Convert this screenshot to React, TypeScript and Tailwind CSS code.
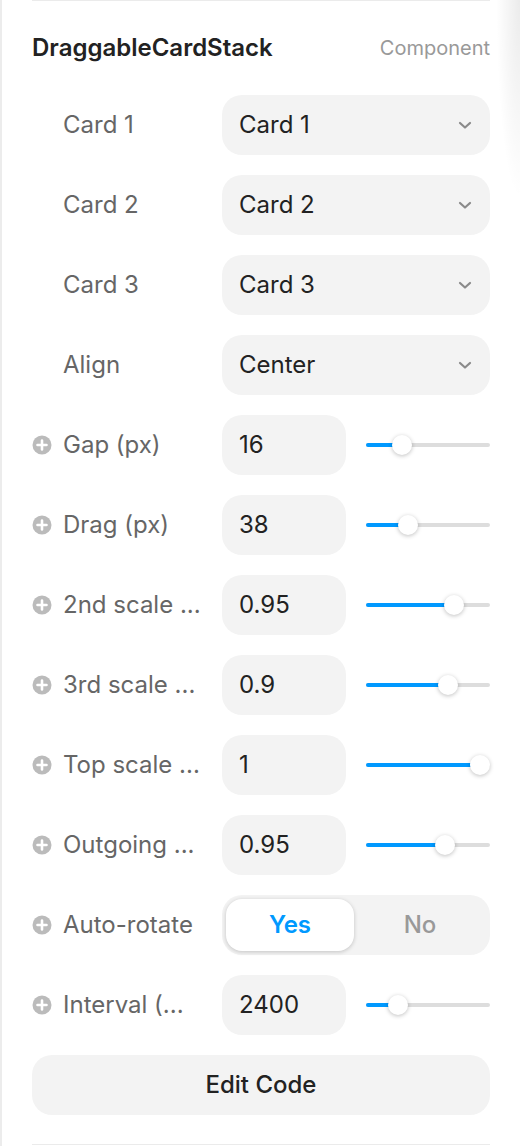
import React from "react";

const font = { fontFamily: "Inter, 'Noto Sans', sans-serif" };

function PlusIcon() {
  return (
    <svg width="20" height="20" viewBox="0 0 20 20" className="shrink-0">
      <circle cx="10" cy="10" r="9.5" fill="#bbbbbb" />
      <path d="M10 5.5v9M5.5 10h9" stroke="#ffffff" strokeWidth="2.6" strokeLinecap="round" />
    </svg>
  );
}

function Chevron() {
  return (
    <svg width="14" height="10" viewBox="0 0 14 10">
      <path d="M2 3l5 4.5L12 3" fill="none" stroke="#8a8a8a" strokeWidth="2.2" strokeLinecap="round" strokeLinejoin="round" />
    </svg>
  );
}

function Label({ text, plus }: { text: string; plus?: boolean }) {
  return (
    <div className="w-[190px] flex items-center h-full">
      <div className="w-[31px] flex items-center">{plus ? <PlusIcon /> : null}</div>
      <span className="text-[24px] text-[#666666] whitespace-nowrap">{text}</span>
    </div>
  );
}

function SelectRow({ label, value }: { label: string; value: string }) {
  return (
    <div className="flex items-center h-[60px]">
      <Label text={label} />
      <div className="flex-1 h-[60px] rounded-[20px] bg-[#f3f3f3] flex items-center justify-between pl-[17px] pr-[18px]">
        <span className="text-[24px] text-[#222222]">{value}</span>
        <Chevron />
      </div>
    </div>
  );
}

function Slider({ frac }: { frac: number }) {
  const center = 10 + frac * 104;
  return (
    <div className="relative w-[124px] h-[20px]">
      <div className="absolute left-0 right-0 top-[8px] h-[4px] rounded-full bg-[#dddddd]" />
      <div className="absolute left-0 top-[8px] h-[4px] rounded-full bg-[#0099ff]" style={{ width: center }} />
      <div
        className="absolute top-0 w-[20px] h-[20px] rounded-full bg-white shadow-[0_1px_4px_rgba(0,0,0,0.25)]"
        style={{ left: center - 10 }}
      />
    </div>
  );
}

function NumberRow({ label, value, frac }: { label: string; value: string; frac: number }) {
  return (
    <div className="flex items-center h-[60px]">
      <Label text={label} plus />
      <div className="w-[124px] h-[60px] rounded-[20px] bg-[#f3f3f3] flex items-center pl-[17px]">
        <span className="text-[24px] text-[#222222]">{value}</span>
      </div>
      <div className="ml-[20px] flex items-center">
        <Slider frac={frac} />
      </div>
    </div>
  );
}

export default function App() {
  return (
    <div style={font} className="relative w-[520px] h-[1146px] bg-white border-l-2 border-[#ececec] overflow-hidden">
      <div className="pl-[30px] pr-[30px] flex flex-col">
        <div className="h-px bg-[#ebebeb]" />
        <div className="h-[94px] flex items-center justify-between">
          <span className="text-[24px] font-semibold text-[#222222]">DraggableCardStack</span>
          <span className="text-[20px] text-[#999999]">Component</span>
        </div>
        <div className="flex flex-col gap-[20px]">
          <SelectRow label="Card 1" value="Card 1" />
          <SelectRow label="Card 2" value="Card 2" />
          <SelectRow label="Card 3" value="Card 3" />
          <SelectRow label="Align" value="Center" />
          <NumberRow label="Gap (px)" value="16" frac={0.25} />
          <NumberRow label="Drag (px)" value="38" frac={0.31} />
          <NumberRow label="2nd scale ..." value="0.95" frac={0.75} />
          <NumberRow label="3rd scale ..." value="0.9" frac={0.69} />
          <NumberRow label="Top scale ..." value="1" frac={1} />
          <NumberRow label="Outgoing ..." value="0.95" frac={0.66} />
          <div className="flex items-center h-[60px]">
            <Label text="Auto-rotate" plus />
            <div className="flex-1 h-[60px] rounded-[20px] bg-[#f3f3f3] flex p-[4px]">
              <div className="w-[128px] h-[52px] rounded-[16px] bg-white shadow-[0_1px_4px_rgba(0,0,0,0.2)] flex items-center justify-center">
                <span className="text-[24px] font-semibold text-[#0099ff]">Yes</span>
              </div>
              <div className="flex-1 flex items-center justify-center">
                <span className="text-[24px] font-medium text-[#999999]">No</span>
              </div>
            </div>
          </div>
          <NumberRow label="Interval (..." value="2400" frac={0.21} />
          <div className="h-[60px] rounded-[20px] bg-[#f3f3f3] flex items-center justify-center">
            <span className="text-[24px] font-medium text-[#222222]">Edit Code</span>
          </div>
        </div>
        <div className="h-[29px]" />
        <div className="h-px bg-[#ebebeb]" />
      </div>
      <div className="absolute top-0 right-0 w-[24px] h-[200px] bg-[radial-gradient(ellipse_at_top_right,rgba(0,0,0,0.08),rgba(0,0,0,0)_70%)]" />
    </div>
  );
}
